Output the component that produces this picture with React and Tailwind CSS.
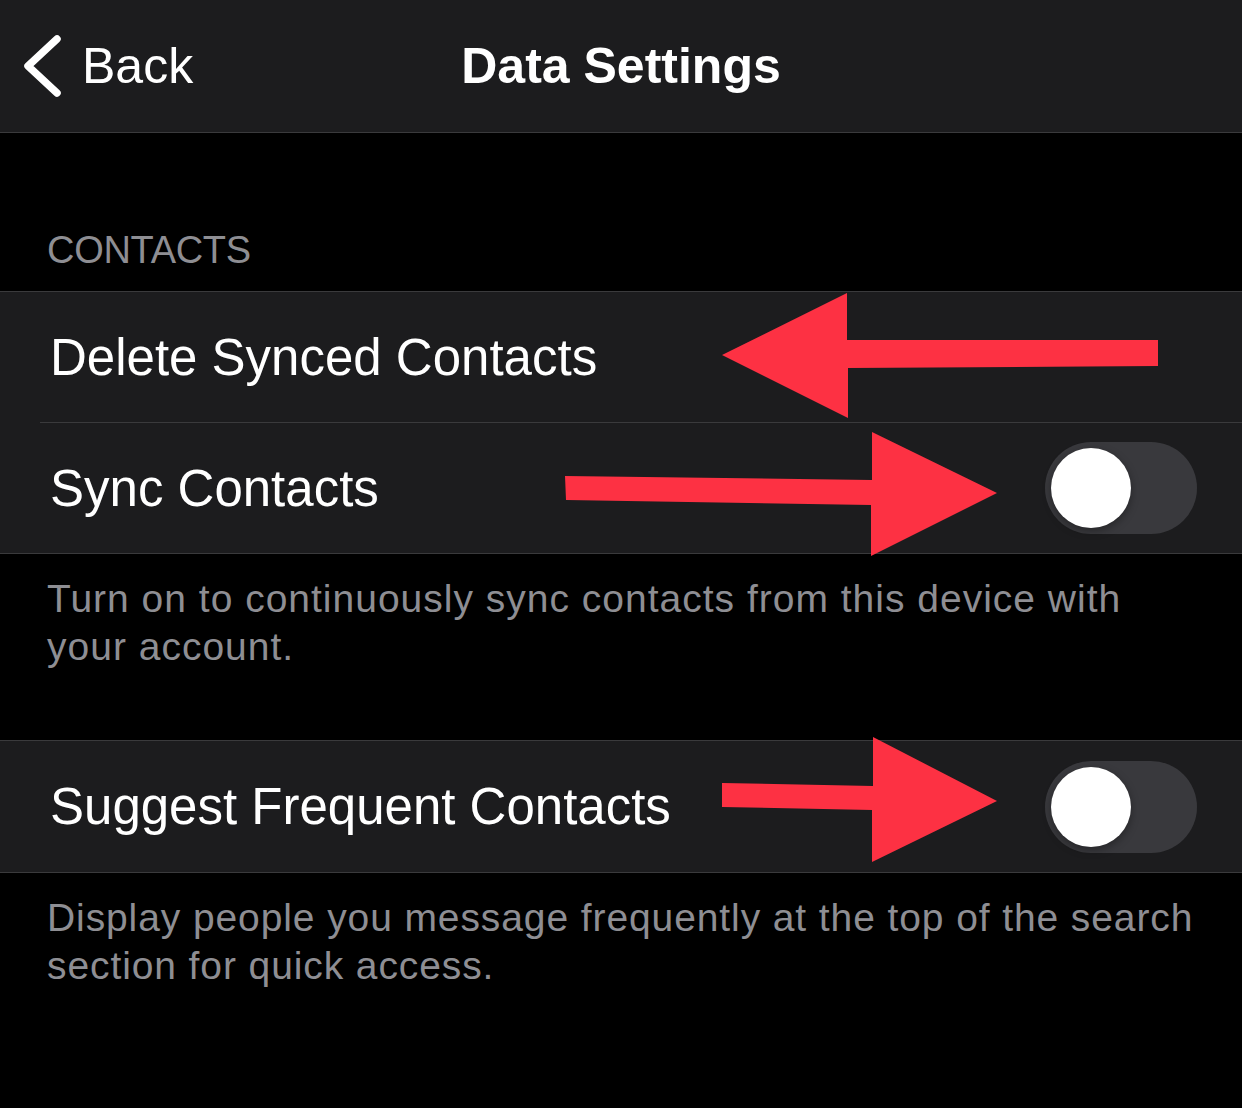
import React, { useState } from "react";

const Toggle = ({ on, onChange }) => {
  return (
    <button
      onClick={() => onChange(!on)}
      className={`relative flex items-center w-[152px] h-[92px] rounded-full p-[6px] ${
        on ? "bg-[#30d158] justify-end" : "bg-[#39393d] justify-start"
      }`}
    >
      <span className="block w-[80px] h-[80px] rounded-full bg-white shadow-[0_3px_8px_rgba(0,0,0,0.35)]" />
    </button>
  );
};

const Arrows = () => (
  <svg
    className="absolute left-0 top-0 pointer-events-none"
    width="1242"
    height="1108"
    viewBox="0 0 1242 1108"
  >
    <polygon
      fill="#fd3143"
      points="722,355 847,293 847,340 1158,340 1158,366 848,368 848,418"
    />
    <polygon
      fill="#fd3143"
      points="565,476 872,480 872,432 997,493 871,556 871,505 566,500"
    />
    <polygon
      fill="#fd3143"
      points="722,783 873,786 873,737 997,801 872,862 872,810 722,807"
    />
  </svg>
);

const App = () => {
  const [sync, setSync] = useState(false);
  const [suggest, setSuggest] = useState(false);

  return (
    <div
      className="relative w-[1242px] h-[1108px] bg-black overflow-hidden"
      style={{ fontFamily: '"Liberation Sans", Arial, sans-serif' }}
    >
      {/* nav bar */}
      <div className="relative flex items-center h-[133px] bg-[#1c1c1e] border-b border-[#3a3a3c]">
        <button className="flex items-center pl-[22px] text-white">
          <svg width="42" height="64" viewBox="0 0 42 64">
            <polyline
              points="35,5 6,32 35,59"
              fill="none"
              stroke="white"
              strokeWidth="7.5"
              strokeLinecap="round"
              strokeLinejoin="round"
            />
          </svg>
          <span className="ml-[18px] text-[50px] leading-none">Back</span>
        </button>
        <div className="absolute left-0 right-0 flex justify-center pointer-events-none">
          <span className="text-white text-[50px] font-bold leading-none">
            Data Settings
          </span>
        </div>
      </div>

      {/* section header */}
      <div className="flex items-end h-[158px] px-[47px] pb-[22px]">
        <span className="text-[#8e8e93] text-[38px] leading-none tracking-[-0.3px]">CONTACTS</span>
      </div>

      {/* group 1 */}
      <div className="bg-[#1c1c1e] border-t border-b border-[#3a3a3c]">
        <div className="flex items-center h-[130px] pl-[50px]">
          <span className="text-white text-[51px] leading-none">Delete Synced Contacts</span>
        </div>
        <div className="ml-[40px] h-px bg-[#3a3a3c]" />
        <div className="flex items-center justify-between h-[130px] pl-[50px] pr-[45px]">
          <span className="text-white text-[51px] leading-none">Sync Contacts</span>
          <Toggle on={sync} onChange={setSync} />
        </div>
      </div>

      <div className="h-[186px] px-[47px] pt-[21px]">
        <p className="text-[#8e8e93] text-[39px] leading-[48px] tracking-[1px]">
          Turn on to continuously sync contacts from this device with
          <br />
          your account.
        </p>
      </div>

      {/* group 2 */}
      <div className="bg-[#1c1c1e] border-t border-b border-[#3a3a3c]">
        <div className="flex items-center justify-between h-[131px] pl-[50px] pr-[45px]">
          <span className="text-white text-[51px] leading-none">Suggest Frequent Contacts</span>
          <Toggle on={suggest} onChange={setSuggest} />
        </div>
      </div>

      <div className="px-[47px] pt-[21px]">
        <p className="text-[#8e8e93] text-[39px] leading-[48px] tracking-[0.9px]">
          Display people you message frequently at the top of the search
          <br />
          section for quick access.
        </p>
      </div>

      <Arrows />
    </div>
  );
};

export default App;
